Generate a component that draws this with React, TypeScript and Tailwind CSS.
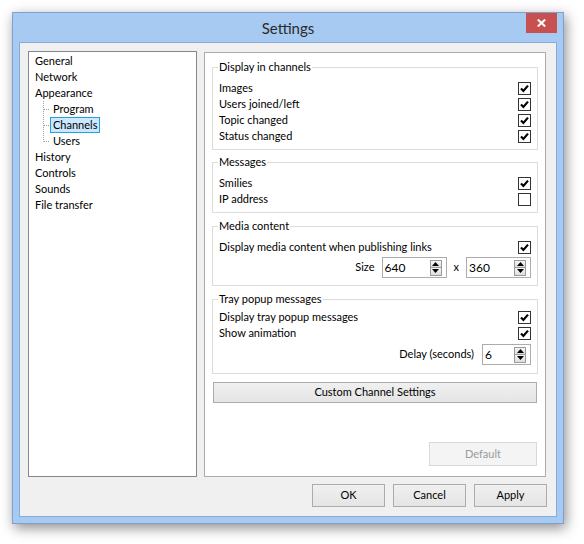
import React from "react";

const Check = ({ checked = true }: { checked?: boolean }) => (
  <div className="w-[13px] h-[13px] border border-[#333333] bg-white flex items-center justify-center shrink-0">
    {checked && (
      <svg width="9" height="9" viewBox="0 0 9 9">
        <path d="M1 4.4 L3.4 6.9 L8 1.6" stroke="#000" strokeWidth="2.2" fill="none" />
      </svg>
    )}
  </div>
);

const Row = ({ label, checked = true }: { label: string; checked?: boolean }) => (
  <div className="h-[16px] flex items-center justify-between">
    <span>{label}</span>
    <Check checked={checked} />
  </div>
);

const Spin = ({ value, w }: { value: string; w: string }) => (
  <div className={`${w} h-[21px] border border-[#acacac] bg-white flex items-center pl-[2px] pr-[4px]`}>
    <span className="flex-1 leading-[16px] text-[12px]">{value}</span>
    <div className="flex flex-col w-[12px]">
      <div className="h-[8px] border border-[#9a9a9a] bg-gradient-to-b from-[#f6f6f6] to-[#dedede] flex items-center justify-center">
        <svg width="7" height="4" viewBox="0 0 7 4">
          <path d="M0 4 L3.5 0 L7 4 Z" fill="#000" />
        </svg>
      </div>
      <div className="h-[8px] border border-t-0 border-[#9a9a9a] bg-gradient-to-b from-[#f6f6f6] to-[#dedede] flex items-center justify-center">
        <svg width="7" height="4" viewBox="0 0 7 4">
          <path d="M0 0 L3.5 4 L7 0 Z" fill="#000" />
        </svg>
      </div>
    </div>
  </div>
);

const Group = ({ title, className = "", children }: { title: string; className?: string; children: React.ReactNode }) => (
  <fieldset className={`border border-[#dcdcdc] px-[6px] ${className}`}>
    <legend className="leading-[16px] px-[1px] -ml-[1px]">{title}</legend>
    {children}
  </fieldset>
);

const Connector = ({ last = false }: { last?: boolean }) => (
  <svg width="8" height="16" viewBox="0 0 8 16" className="shrink-0">
    <line x1="1.5" y1="0" x2="1.5" y2={last ? 8.5 : 16} stroke="#a0a0a0" strokeDasharray="1 1" />
    <line x1="2" y1="8.5" x2="8" y2="8.5" stroke="#a0a0a0" strokeDasharray="1 1" />
  </svg>
);

const Button = ({ label, className = "" }: { label: string; className?: string }) => (
  <div
    className={`border border-[#acacac] bg-gradient-to-b from-[#f0f0f0] to-[#e5e5e5] flex items-center justify-center ${className}`}
  >
    {label}
  </div>
);

export default function App() {
  return (
    <div className="w-[584px] h-[544px] bg-white pl-[12px] pt-[12px] text-[11px] text-black [font-family:'Lato','Noto_Sans',sans-serif]">
      <div className="w-[552px] h-[512px] flex flex-col bg-[#a6caf2] border border-[#7f9fcc] shadow-[2px_4px_12px_rgba(0,0,0,0.45)]">
        {/* Title bar */}
        <div className="h-[29px] grid grid-cols-[1fr_auto_1fr]">
          <div />
          <div className="flex items-center text-[15px] text-[#2b2b2b] pt-[1px]">Settings</div>
          <div className="flex justify-end pr-[6px]">
            <div className="w-[31px] h-[20px] bg-[#c75050] flex items-center justify-center">
              <svg width="9" height="8" viewBox="0 0 9 8">
                <path d="M0.8 0.5 L8.2 7.5 M8.2 0.5 L0.8 7.5" stroke="#fff" strokeWidth="2" />
              </svg>
            </div>
          </div>
        </div>

        {/* Client area */}
        <div className="mx-[6px] h-[475px] bg-[#f0f0f0] border border-[#87aadb] flex flex-col">
          <div className="flex items-start pl-[8px] pr-[10px] pt-[8px] gap-[7px]">
            {/* Tree */}
            <div className="w-[169px] h-[426px] bg-white border border-[#828790] pt-[1px] pl-[6px]">
              <div className="h-[16px] flex items-center">General</div>
              <div className="h-[16px] flex items-center">Network</div>
              <div className="h-[16px] flex items-center">Appearance</div>
              <div className="ml-[7px]">
                <div className="h-[16px] flex items-center">
                  <Connector />
                  <span className="border border-transparent px-[2px] leading-[14px]">Program</span>
                </div>
                <div className="h-[16px] flex items-center">
                  <Connector />
                  <span className="border border-[#26a0da] bg-[#cce8ff] px-[2px] leading-[14px]">Channels</span>
                </div>
                <div className="h-[16px] flex items-center">
                  <Connector last />
                  <span className="border border-transparent px-[2px] leading-[14px]">Users</span>
                </div>
              </div>
              <div className="h-[16px] flex items-center">History</div>
              <div className="h-[16px] flex items-center">Controls</div>
              <div className="h-[16px] flex items-center">Sounds</div>
              <div className="h-[16px] flex items-center">File transfer</div>
            </div>

            {/* Right panel */}
            <div className="mt-[1px] w-[342px] h-[425px] bg-white border border-[#acacac] flex flex-col px-[7px] pt-[6px]">
              <Group title="Display in channels" className="pt-[5px] pb-[5px]">
                <Row label="Images" />
                <Row label="Users joined/left" />
                <Row label="Topic changed" />
                <Row label="Status changed" />
              </Group>
              <Group title="Messages" className="mt-[4px] pt-[5px] pb-[5px]">
                <Row label="Smilies" />
                <Row label="IP address" checked={false} />
              </Group>
              <Group title="Media content" className="mt-[5px] pt-[5px] pb-[7px]">
                <Row label="Display media content when publishing links" />
                <div className="mt-[2px] flex items-center justify-end">
                  <span className="mr-[7px]">Size</span>
                  <Spin value="640" w="w-[65px]" />
                  <span className="mx-[7px]">x</span>
                  <Spin value="360" w="w-[65px]" />
                </div>
              </Group>
              <Group title="Tray popup messages" className="mt-[5px] pt-[2px] pb-[8px]">
                <Row label="Display tray popup messages" />
                <Row label="Show animation" />
                <div className="mt-[3px] flex items-center justify-end">
                  <span className="mr-[8px]">Delay (seconds)</span>
                  <Spin value="6" w="w-[49px]" />
                </div>
              </Group>
              <Button label="Custom Channel Settings" className="mt-[8px] mx-[1px] h-[21px]" />
              <div className="mt-auto mb-[10px] flex justify-end pr-[1px]">
                <div className="w-[108px] h-[24px] border border-[#d9d9d9] bg-[#f4f4f4] text-[#9a9a9a] flex items-center justify-center">
                  Default
                </div>
              </div>
            </div>
          </div>

          {/* Bottom buttons */}
          <div className="mt-[7px] flex justify-end gap-[8px] pr-[9px]">
            <Button label="OK" className="w-[73px] h-[23px]" />
            <Button label="Cancel" className="w-[73px] h-[23px]" />
            <Button label="Apply" className="w-[73px] h-[23px]" />
          </div>
        </div>
      </div>
    </div>
  );
}
